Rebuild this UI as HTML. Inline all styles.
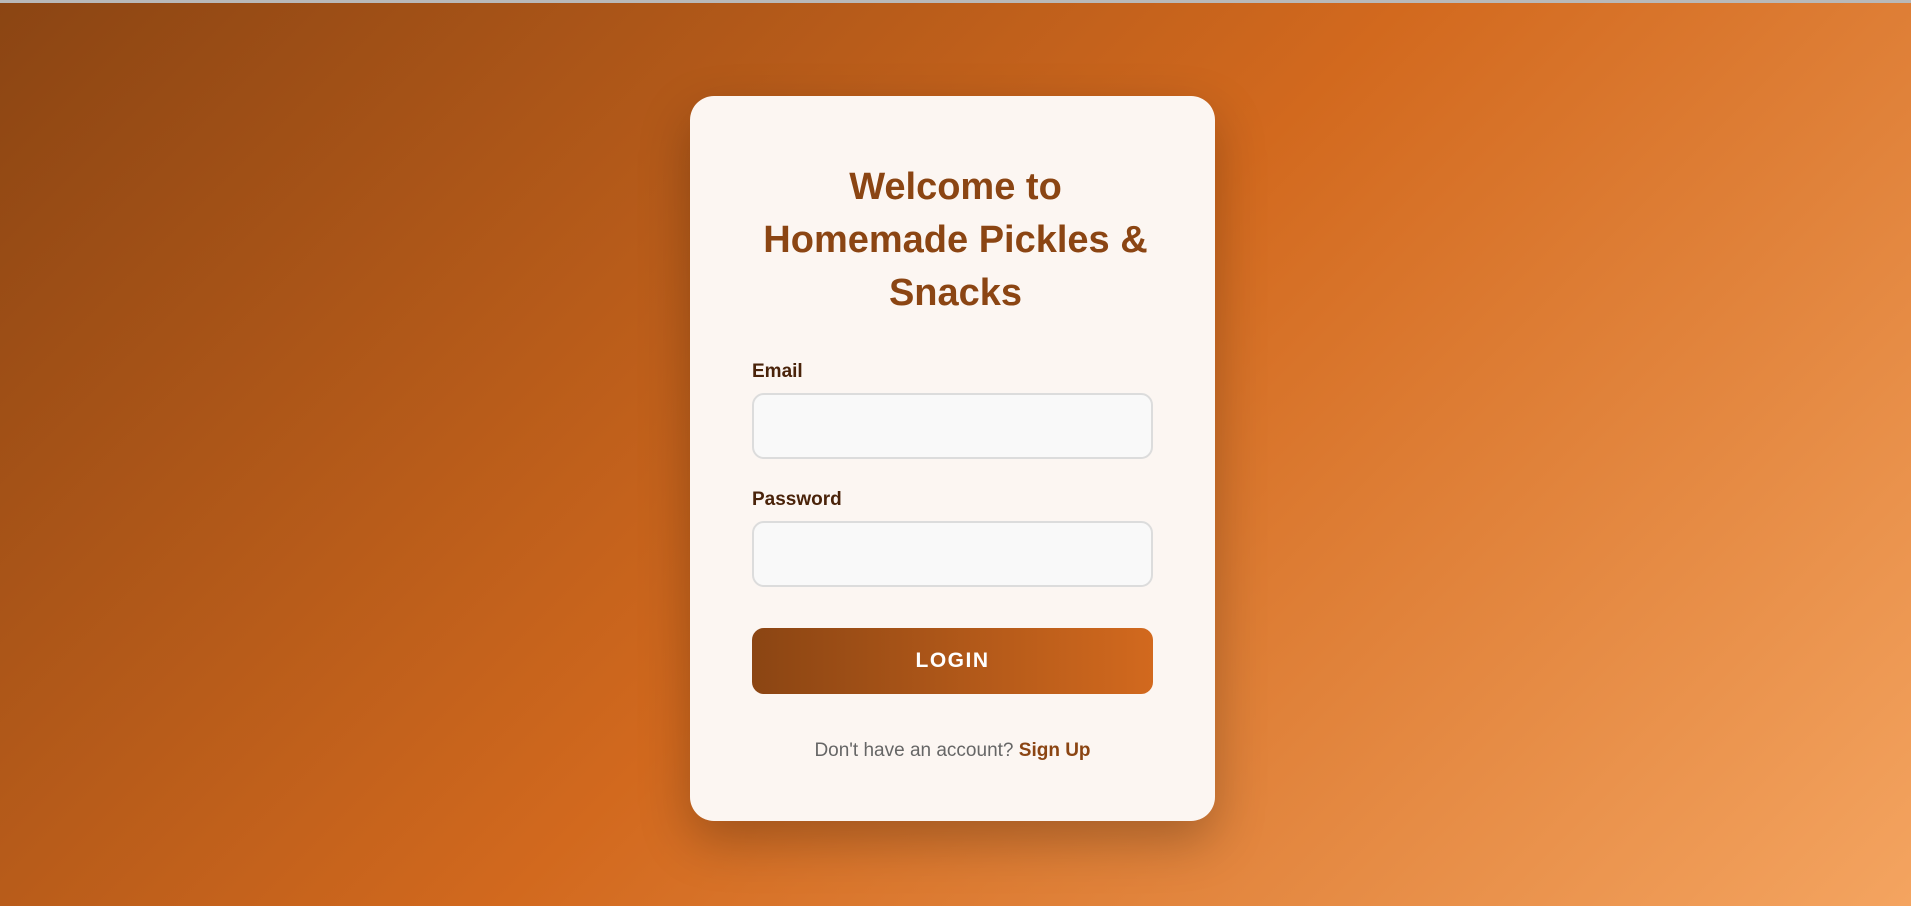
<!DOCTYPE html>
<html><head><meta charset="utf-8"><style>
html,body{margin:0;padding:0;width:1911px;height:906px;overflow:hidden}
body{background:linear-gradient(135deg,#8B4513 0%,#D2691E 50%,#F4A460 100%);font-family:"Liberation Sans",sans-serif;position:relative}
.top{position:absolute;left:0;top:0;width:100%;height:3px;background:#b9b9b9}
.card{position:absolute;left:690px;top:96px;width:525px;height:725px;background:#fcf6f2;border-radius:24px;box-shadow:0 20px 50px rgba(0,0,0,0.25)}
h1{position:absolute;left:0;width:100%;top:161px;margin:0;text-align:center;color:#8B4513;font-size:38px;font-weight:bold;line-height:53px}
.lbl{position:absolute;left:752px;color:#4a230a;font-size:19px;font-weight:bold}
.inp{position:absolute;left:752px;width:397px;height:62px;border:2px solid #dcdcdc;border-radius:12px;background:#f9f9f9}
.btn{position:absolute;left:752px;top:628px;width:401px;height:66px;border-radius:12px;background:linear-gradient(90deg,#8B4513,#D2691E);color:#fff;font-weight:bold;font-size:21px;letter-spacing:1.5px;text-align:center;line-height:66px}
.ft{position:absolute;left:690px;width:525px;top:740px;text-align:center;font-size:19px;color:#666}
.ft b{color:#8B4513}
</style></head><body>
<div class="top"></div>
<div class="card"></div>
<h1>Welcome to<br>Homemade Pickles &amp;<br>Snacks</h1>
<div class="lbl" style="top:361px">Email</div>
<div class="inp" style="top:393px"></div>
<div class="lbl" style="top:489px">Password</div>
<div class="inp" style="top:521px"></div>
<div class="btn">LOGIN</div>
<div class="ft">Don't have an account? <b>Sign Up</b></div>
</body></html>
